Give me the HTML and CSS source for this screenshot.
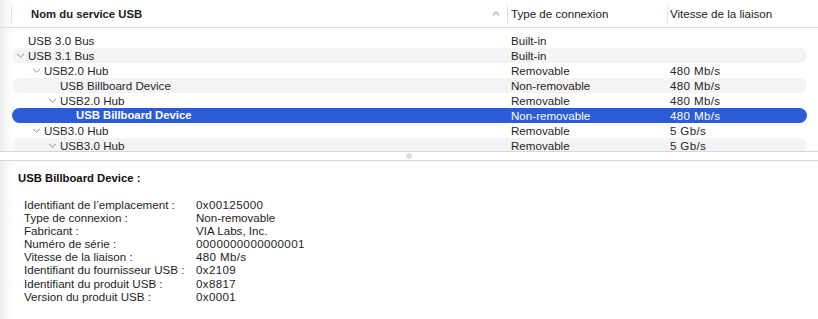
FILE: index.html
```html
<!DOCTYPE html>
<html lang="fr">
<head>
<meta charset="utf-8">
<title>Informations système – USB</title>
<link rel="stylesheet" href="styles.css">
</head>
<body>
<div class="window">
  <div class="table">
    <div class="header">
      <div class="hcell hname">Nom du service USB
        <svg class="sort" width="8" height="5" viewBox="0 0 8 5"><path d="M0.8 4.3 L4 1.1 L7.2 4.3" fill="none" stroke="#a4a4a4" stroke-width="1.1"/></svg>
      </div>
      <div class="hcell htype">Type de connexion</div>
      <div class="hcell hspeed">Vitesse de la liaison</div>
    </div>
    <div class="rows">
      <div class="row">
        <div class="cname lvl0"><span class="chev"></span>USB 3.0 Bus</div>
        <div class="ctype">Built-in</div>
        <div class="cspeed"></div>
      </div>
      <div class="row alt">
        <div class="cname lvl0"><span class="chev"><svg width="9" height="5" viewBox="0 0 9 5"><path d="M1 0.8 L4.5 4.2 L8 0.8" fill="none" stroke="#8e8e8e" stroke-width="1"/></svg></span>USB 3.1 Bus</div>
        <div class="ctype">Built-in</div>
        <div class="cspeed"></div>
      </div>
      <div class="row">
        <div class="cname lvl1"><span class="chev"><svg width="9" height="5" viewBox="0 0 9 5"><path d="M1 0.8 L4.5 4.2 L8 0.8" fill="none" stroke="#8e8e8e" stroke-width="1"/></svg></span>USB2.0 Hub</div>
        <div class="ctype">Removable</div>
        <div class="cspeed num">480 Mb/s</div>
      </div>
      <div class="row alt">
        <div class="cname lvl2"><span class="chev"></span>USB Billboard Device</div>
        <div class="ctype">Non-removable</div>
        <div class="cspeed num">480 Mb/s</div>
      </div>
      <div class="row">
        <div class="cname lvl2"><span class="chev"><svg width="9" height="5" viewBox="0 0 9 5"><path d="M1 0.8 L4.5 4.2 L8 0.8" fill="none" stroke="#8e8e8e" stroke-width="1"/></svg></span>USB2.0 Hub</div>
        <div class="ctype">Removable</div>
        <div class="cspeed num">480 Mb/s</div>
      </div>
      <div class="row selected">
        <div class="cname lvl3"><span class="chev"></span>USB Billboard Device</div>
        <div class="ctype">Non-removable</div>
        <div class="cspeed num">480 Mb/s</div>
      </div>
      <div class="row">
        <div class="cname lvl1"><span class="chev"><svg width="9" height="5" viewBox="0 0 9 5"><path d="M1 0.8 L4.5 4.2 L8 0.8" fill="none" stroke="#8e8e8e" stroke-width="1"/></svg></span>USB3.0 Hub</div>
        <div class="ctype">Removable</div>
        <div class="cspeed num">5 Gb/s</div>
      </div>
      <div class="row alt">
        <div class="cname lvl2"><span class="chev"><svg width="9" height="5" viewBox="0 0 9 5"><path d="M1 0.8 L4.5 4.2 L8 0.8" fill="none" stroke="#8e8e8e" stroke-width="1"/></svg></span>USB3.0 Hub</div>
        <div class="ctype">Removable</div>
        <div class="cspeed num">5 Gb/s</div>
      </div>
    </div>
  </div>
  <div class="splitter"><span class="dot"></span></div>
  <div class="detail">
    <div class="dtitle">USB Billboard Device :</div>
    <dl class="props">
      <dt>Identifiant de l’emplacement :</dt><dd class="num">0x00125000</dd>
      <dt>Type de connexion :</dt><dd>Non-removable</dd>
      <dt>Fabricant :</dt><dd>VIA Labs, Inc.</dd>
      <dt>Numéro de série :</dt><dd class="num">0000000000000001</dd>
      <dt>Vitesse de la liaison :</dt><dd class="num">480 Mb/s</dd>
      <dt>Identifiant du fournisseur USB :</dt><dd class="num">0x2109</dd>
      <dt>Identifiant du produit USB :</dt><dd class="num">0x8817</dd>
      <dt>Version du produit USB :</dt><dd class="num">0x0001</dd>
    </dl>
  </div>
</div>
</body>
</html>
```

FILE: styles.css
```css
* { box-sizing: border-box; }
html, body { margin: 0; padding: 0; }
body {
  width: 818px;
  height: 319px;
  overflow: hidden;
  font-family: "Liberation Sans", Arial, sans-serif;
  font-size: 11.6px;
  color: #262626;
  background: #fff;
}
.window {
  height: 319px;
  background: linear-gradient(to right, #ebebeb 0px, #f7f7f7 6px, #ffffff 14px);
}
.table { display: flex; flex-direction: column; }
.header {
  height: 28px;
  display: flex;
  padding-left: 11px;
  border-bottom: 1px solid #dedede;
  align-items: center;
}
.hcell {
  height: 18px;
  line-height: 18px;
  border-left: 1px solid #e2e2e2;
  color: #222;
  white-space: nowrap;
}
.hname {
  width: 496px;
  padding-left: 19px;
  font-weight: bold;
  font-size: 11.3px;
  display: flex;
  align-items: center;
}
.sort { margin-left: auto; margin-right: 7px; }
.htype { width: 160px; padding-left: 3px; }
.hspeed { flex: 1; padding-left: 2px; border-left-color: #e6e6e6; }
.rows { padding-top: 5px; }
.row {
  margin: 0 11px 0 12px;
  height: 15px;
  line-height: 15px;
  border-radius: 7.5px;
  display: flex;
  white-space: nowrap;
}
.row.alt { background: #f4f4f4; }
.row.selected { background: #2c5bd8; color: #fff; }
.row.selected .cname { font-weight: bold; font-size: 11.3px; }
.cname { width: 499px; display: flex; align-items: center; }
.ctype { width: 159px; }
.cspeed { flex: 1; }
.num { letter-spacing: 0.35px; }
.chev { width: 13px; height: 15px; display: inline-flex; align-items: center; padding-left: 1px; }
.lvl0 { padding-left: 3px; }
.lvl1 { padding-left: 19px; }
.lvl2 { padding-left: 35px; }
.lvl3 { padding-left: 51px; }
.splitter {
  position: relative;
  margin-top: -2px;
  height: 10px;
  border-top: 1px solid #d6d6d6;
  border-bottom: 1px solid #d6d6d6;
  background: #fff;
  display: flex;
  justify-content: center;
  align-items: center;
}
.dot {
  width: 6px;
  height: 6px;
  border-radius: 50%;
  background: #dcdcdc;
}
.detail { padding: 10px 0 0 18px; color: #1e1e1e; }
.dtitle { font-weight: bold; font-size: 11.3px; line-height: 15px; color: #111; }
.props {
  margin: 12px 0 0 6px;
  display: grid;
  grid-template-columns: 172px auto;
  line-height: 13.1px;
}
.props dt, .props dd { margin: 0; }
```
